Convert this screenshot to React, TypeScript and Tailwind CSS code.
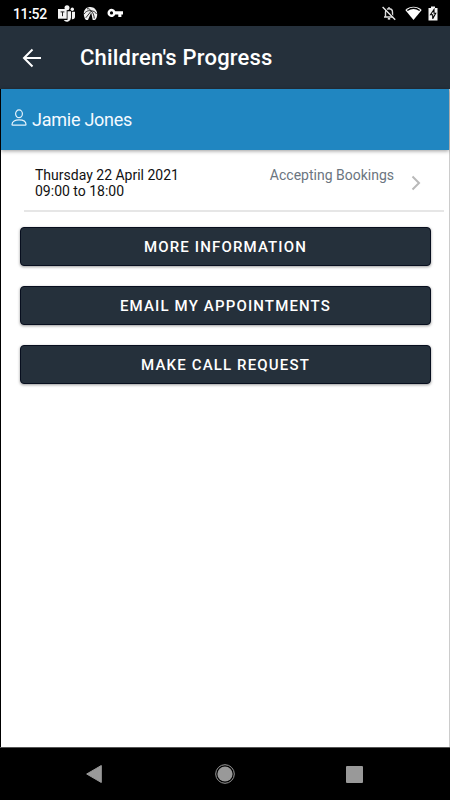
const actions = ["More information", "Email my appointments", "Make call request"];

function StatusBar() {
  return (
    <div className="h-[26px] shrink-0 bg-black flex items-center pl-[13px] pr-[12px] text-white">
      <span className="text-[14px] leading-[26px] font-medium tracking-[-0.35px] w-[45px] whitespace-nowrap pt-[1px]">11:52</span>

      {/* Teams */}
      <svg width="17" height="17" viewBox="0 0 17 17" className="block" fill="#f4f4f4">
        <circle cx="9" cy="2.800" r="2.500" />
        <circle cx="14.300" cy="4.200" r="1.700" />
        <path d="M9.500 6.300H13v6.200a4 4 0 0 1-7.300 2.400h3.800z" />
        <path d="M13.900 6.700H17v4.800a2.800 2.800 0 0 1-3.100 2.800z" />
        <path d="M0 4h8.700v9.700H0z" />
        <path d="M2.600 6.900h3.800M4.500 6.900v4.300" stroke="#222" strokeWidth="1" fill="none" />
      </svg>

      {/* VPN globe */}
      <svg width="15" height="15" viewBox="0 0 15 15" className="block ml-[8px]" fill="#f0f0f0">
        <path d="M.8 7.200C1 3 4 1 7.500 1S14 3.800 14.200 7.800c.1 2.900-.8 5-2.200 6.200H9.700L8.200 6.500 5 14H3C1.500 12.500.7 9.800.8 7.200z" />
        <path d="M1 8C3 5 6 4 8.300 5M4 2.800C6 2.400 7.300 3.500 8.300 5M8.300 5c2-.3 4 .8 5.200 3M8.300 5c1.700 1.600 2.800 4.200 3 7.500M8 5.300L2.800 11.800" stroke="#000" strokeWidth=".8" fill="none" />
      </svg>

      {/* Key */}
      <svg width="16" height="10" viewBox="0 0 16 10" className="block ml-[9px]">
        <path
          fill="#fff"
          fillRule="evenodd"
          d="M8.300 3.200A4.100 4.100 0 1 0 8.300 6.600h3v2.400h3.100V6.600H16V3.200zM4.500 3.300a1.600 1.600 0 1 1 0 3.200 1.600 1.600 0 0 1 0-3.200z"
        />
      </svg>

      <svg width="14" height="15" viewBox="0 0 14 15" className="block ml-auto" fill="none" stroke="#ddd" strokeWidth="1.4">
        <path d="M2 11h10M3.500 11V6.200C3.500 4 5 2.800 7 2.800S10.500 4 10.500 6.200V11M7 1v2" />
        <path d="M5.800 12.800h2.400" strokeWidth="1.7" />
        <path d="M1.200 .6l12.200 12.500" stroke="#000" strokeWidth="1.5" />
        <path d="M.6 1l12.600 12.800" stroke="#eee" strokeWidth="1.3" />
      </svg>

      <svg width="17" height="14" viewBox="0 0 17 14" className="block ml-[9px]">
        <path d="M.3 4C5-.4 12-.4 16.700 4L8.500 14z" fill="#fff" />
        <path d="M2.300 4.500C6 1.900 11 1.900 14.700 4.500" stroke="#000" strokeWidth="1.500" fill="none" />
      </svg>

      <svg width="10" height="15" viewBox="0 0 10 15" className="block ml-[6px]">
        <path d="M3 .5h4V2h2.500v12.500h-9V2H3z" fill="#f5f5f5" />
        <path d="M6 3.500L2.500 8.800h2.200v4L7.700 7.200H6z" fill="#fff" stroke="#000" strokeWidth="1.100" />
      </svg>
    </div>
  );
}

function Header() {
  return (
    <header className="h-[63px] shrink-0 bg-[#25303b] flex items-center pl-[22px]">
      <svg width="20" height="20" viewBox="0 0 20 20" fill="none" stroke="#fff" strokeWidth="2" className="block">
        <path d="M19 10H2M10.500 1.500L2 10l8.500 8.500" />
      </svg>
      <h1 className="ml-[38px] text-[22px] leading-[26px] font-medium tracking-[0.2px] text-white whitespace-nowrap">
        Children's Progress
      </h1>
    </header>
  );
}

function ChildBanner() {
  return (
    <div className="h-[61px] shrink-0 bg-[#2086c1] flex items-center pl-[10px] relative shadow-[0_1px_4px_rgba(0,0,0,0.4)]">
      <svg width="16" height="17" viewBox="0 0 16 17" fill="none" stroke="#e4f2fb" strokeWidth="1.200" className="block -mt-[5px]">
        <ellipse cx="8" cy="4.800" rx="3.400" ry="3.900" />
        <path d="M1 15.500c0-3.300 3.400-4.700 7-4.700s7 1.400 7 4.700c0 .4-.3.700-.7.700H1.700c-.4 0-.7-.3-.7-.7z" />
      </svg>
      <span className="ml-[5px] text-[18px] leading-6 tracking-[-0.25px] text-[#f4faff] whitespace-nowrap">Jamie Jones</span>
    </div>
  );
}

function EventRow() {
  return (
    <div className="ml-[23px] mr-[5px] h-[62px] shrink-0 border-b-2 border-[#e6e6e6] pl-[11px] pr-[23px] pt-[17px] flex items-start">
      <div className="text-[14px] leading-[16px] text-[#111] whitespace-nowrap">
        <div>Thursday 22 April 2021</div>
        <div>09:00 to 18:00</div>
      </div>
      <div className="ml-auto text-[14px] leading-[16px] text-[#6b7580] whitespace-nowrap">Accepting Bookings</div>
      <svg width="10" height="16" viewBox="0 0 10 16" fill="none" stroke="#b9b9b9" strokeWidth="2" className="block ml-[17px] mt-[8px]">
        <path d="M1.500 1.500L8 8l-6.500 6.500" />
      </svg>
    </div>
  );
}

function NavBar() {
  return (
    <nav className="h-[53px] shrink-0 bg-black border-t border-[#555] flex items-center justify-between pl-[86px] pr-[87px]">
      <svg width="18" height="18" viewBox="0 0 18 18" className="block">
        <path d="M15.300.5v17L.7 9z" fill="#999" stroke="#999" strokeWidth="1" strokeLinejoin="round" />
      </svg>
      <svg width="20" height="20" viewBox="0 0 20 20" className="block">
        <circle cx="10" cy="10" r="9.300" fill="none" stroke="#999" strokeWidth="1" />
        <circle cx="10" cy="10" r="7.600" fill="#999" />
      </svg>
      <div className="size-[17px] rounded-[1px] bg-[#999]" />
    </nav>
  );
}

export default function App() {
  return (
    <div className="w-[450px] h-[800px] flex flex-col overflow-hidden bg-white font-[Roboto,sans-serif]">
      <StatusBar />
      <Header />
      <main className="flex-1 min-h-0 flex flex-col border-l border-l-black border-r border-r-[#ccc]">
        <ChildBanner />
        <EventRow />
        <div className="flex flex-col gap-5 pt-[15px] pl-[19px] pr-[18px]">
          {actions.map((label) => (
            <button
              key={label}
              className="h-[39px] rounded-[4px] bg-[#25303b] border border-[#070e1e] text-white text-[15px] leading-5 font-medium uppercase tracking-[1.15px] shadow-[0_1px_3px_rgba(0,0,0,0.4)]"
            >
              {label}
            </button>
          ))}
        </div>
      </main>
      <NavBar />
    </div>
  );
}
